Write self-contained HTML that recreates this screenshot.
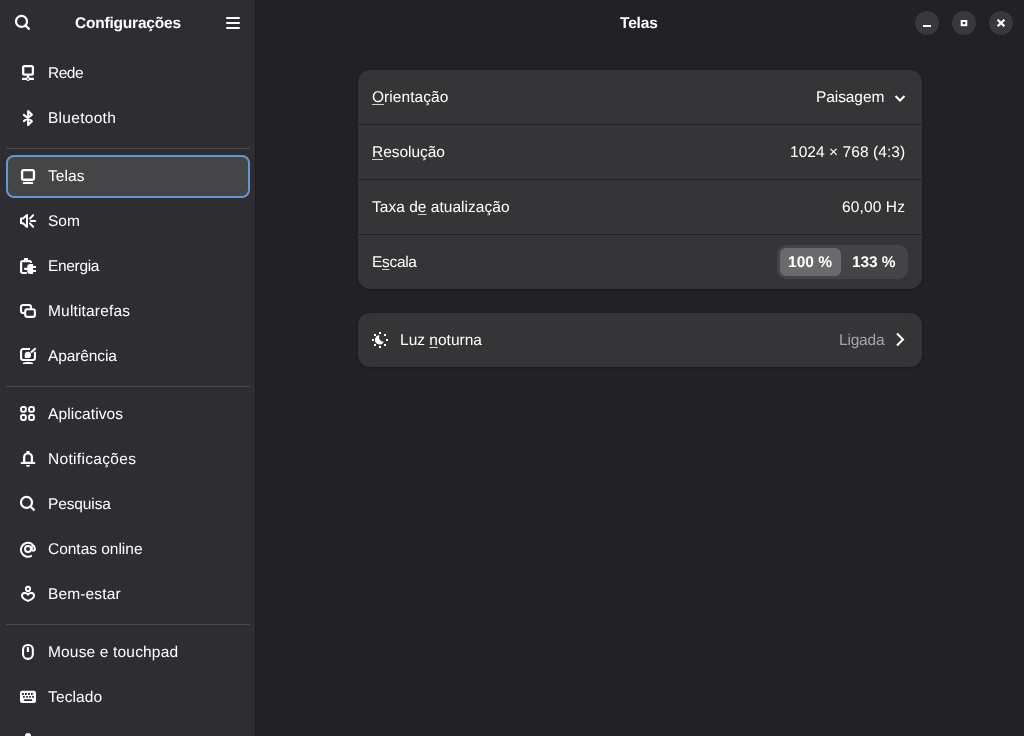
<!DOCTYPE html>
<html><head><meta charset="utf-8">
<style>
html,body{margin:0;padding:0;width:1024px;height:736px;overflow:hidden;background:#222226;}
*{box-sizing:border-box;}
body{font-family:"Liberation Sans",sans-serif;text-rendering:geometricPrecision;color:#fff;font-size:15.5px;position:relative;}
.abs{position:absolute;}
#sb{position:absolute;left:0;top:0;width:255px;height:736px;background:#2e2e32;}
#sbb{position:absolute;left:255px;top:0;width:1px;height:736px;background:#1c1c20;}
.t{position:absolute;margin-top:1px;white-space:nowrap;will-change:transform;line-height:18px;height:18px;}
.r{text-align:right;}
.b{font-weight:bold;}
.ic{position:absolute;width:16px;height:16px;overflow:visible;}
.sep{position:absolute;left:6px;width:244px;height:1px;background:#4a4a4e;}
.sel{position:absolute;left:6px;top:155px;width:244px;height:43px;border-radius:8px;background:#454548;border:2px solid #6597d2;}
.card{position:absolute;left:358px;width:564px;background:#353538;border-radius:12px;box-shadow:0 0 0 1px rgba(0,0,6,0.04),0 1px 3px 0 rgba(0,0,6,0.22);}
.rsep{position:absolute;left:0;width:564px;height:1px;background:#232327;}
.u{text-decoration:underline;text-decoration-thickness:1.4px;text-underline-offset:1.6px;text-decoration-color:rgba(255,255,255,0.78);}
.wb{position:absolute;top:11px;width:24px;height:24px;border-radius:12px;background:#39393d;}
</style></head><body>
<div id="sb"></div><div id="sbb"></div>

<svg class="ic" style="left:15px;top:15px" viewBox="0 0 16 16"><circle cx="6.5" cy="6.4" r="5.5" fill="none" stroke="#fff" stroke-width="2.2"/><path stroke="#fff" stroke-width="2.2" d="M10.3,10.3L14.5,14.5"/></svg>
<div class="t b" id="h1" style="left:75px;top:13.5px;letter-spacing:-0.202px;">Configurações</div>
<svg class="abs" style="left:224px;top:14px" width="18" height="18" viewBox="0 0 18 18"><path stroke="#fff" stroke-width="2" stroke-linecap="round" d="M3,4H15M3,9H15M3,14H15"/></svg>

<div class="sep" style="top:148px"></div>
<div class="sep" style="top:386px"></div>
<div class="sep" style="top:624px"></div>
<div class="sel"></div>
<svg class="ic" style="left:20px;top:65px" viewBox="0 0 16 16" fill="#fff"><path fill-rule="evenodd" d="M4.5,0H11.5A2.5,2.5 0 0 1 14,2.5V8.3A2.5,2.5 0 0 1 11.5,10.8H4.5A2.5,2.5 0 0 1 2,8.3V2.5A2.5,2.5 0 0 1 4.5,0ZM4.3,2.2V8.6H11.8V2.2Z"/><rect x="6.8" y="10.5" width="2.4" height="2.5"/><rect x="2" y="12.8" width="12" height="2.1" rx="0.6"/><circle cx="8" cy="14" r="1.9"/><rect x="7.2" y="13.3" width="1.6" height="1.3" fill="#2e2e32"/></svg>
<div class="t" id="s0" style="left:48px;top:64px;letter-spacing:-0.486px;">Rede</div>
<svg class="ic" style="left:20px;top:110px" viewBox="0 0 16 16" fill="#fff"><path fill="none" stroke="#fff" stroke-width="2.1" stroke-linecap="round" stroke-linejoin="round" d="M3.9,4.9L11.9,11.3L8.15,14.9V1.05L11.9,4.7L3.9,11.1"/></svg>
<div class="t" id="s1" style="left:48px;top:109px;letter-spacing:0.283px;">Bluetooth</div>
<svg class="ic" style="left:20px;top:168px" viewBox="0 0 16 16" fill="#fff"><path fill-rule="evenodd" d="M3.8,0.9H12.2A2.9,2.9 0 0 1 15.1,3.8V10.1A2.9,2.9 0 0 1 12.2,13H3.8A2.9,2.9 0 0 1 0.9,10.1V3.8A2.9,2.9 0 0 1 3.8,0.9ZM3.3,3.3V10.5H12.8V3.3Z"/><path d="M2.8,15.9V14.3Q8,13.3 13.1,14.3V15.9Z"/></svg>
<div class="t" id="s2" style="left:48px;top:167px;letter-spacing:0.075px;">Telas</div>
<svg class="ic" style="left:20px;top:213px" viewBox="0 0 16 16" fill="#fff"><path fill="none" stroke="#fff" stroke-width="2" stroke-linejoin="round" d="M1,5.5V10.3H3L7,13.9V2L3,5.5Z"/><path fill="none" stroke="#fff" stroke-width="2" stroke-linecap="round" d="M9.9,5.6L13.1,2.3M10.9,8H15.2M9.9,10.4L13.1,13.7"/></svg>
<div class="t" id="s3" style="left:48px;top:212px;letter-spacing:0.000px;">Som</div>
<svg class="ic" style="left:20px;top:258px" viewBox="0 0 16 16" fill="#fff"><path d="M4,0H8V2H4Z"/><path fill-rule="evenodd" d="M3,2H9.5A2.5,2.5 0 0 1 12,4.5V5H10A0.5,0.5 0 0 0 9.5,4.3H2.2V13.9H6.8V15.9H3A3,3 0 0 1 0,12.9V5A3,3 0 0 1 3,2Z"/><path d="M10.2,5.9H13.1V8H16V10H13.1V12H16V14H13.1V15.9H10.2A3,3 0 0 1 7.2,12.9V12.1H4.2V9.8H7.2V8.9A3,3 0 0 1 10.2,5.9Z"/></svg>
<div class="t" id="s4" style="left:48px;top:257px;letter-spacing:-0.333px;">Energia</div>
<svg class="ic" style="left:20px;top:303px" viewBox="0 0 16 16" fill="#fff"><path fill="none" stroke="#fff" stroke-width="2.1" d="M5,10H3A2,2 0 0 1 1,8V4A2,2 0 0 1 3,2H9A2,2 0 0 1 11,4V6.1"/><rect x="5.2" y="6.2" width="9.7" height="7.7" rx="2.2" fill="none" stroke="#fff" stroke-width="2.1"/></svg>
<div class="t" id="s5" style="left:48px;top:302px;letter-spacing:0.172px;">Multitarefas</div>
<svg class="ic" style="left:20px;top:348px" viewBox="0 0 16 16" fill="#fff"><path fill="none" stroke="#fff" stroke-width="2.1" d="M10,1.05H3.3A2.25,2.25 0 0 0 1.05,3.3V9.7A2.25,2.25 0 0 0 3.3,11.95H12.7A2.25,2.25 0 0 0 14.95,9.7V3.87"/><path d="M2.9,16V14.8C4.2,13.6 11.6,13.6 12.9,14.8V16Z"/><path d="M4.75,10.1V7A3.15,3.15 0 1 1 7.9,10.1Z"/><path stroke="#fff" stroke-width="2.1" d="M10.9,4.6L15.7,0.2"/></svg>
<div class="t" id="s6" style="left:48px;top:347px;letter-spacing:-0.108px;">Aparência</div>
<svg class="ic" style="left:20px;top:406px" viewBox="0 0 16 16" fill="#fff"><g fill="none" stroke="#fff" stroke-width="1.95"><rect x="1.1" y="0.9" width="4.7" height="4.8" rx="1.6"/><rect x="9.1" y="0.9" width="4.8" height="4.8" rx="1.6"/><rect x="1.1" y="9" width="4.7" height="4.9" rx="1.6"/><rect x="9.1" y="9" width="4.8" height="4.9" rx="1.6"/></g></svg>
<div class="t" id="s7" style="left:48px;top:405px;letter-spacing:0.100px;">Aplicativos</div>
<svg class="ic" style="left:20px;top:451px" viewBox="0 0 16 16" fill="#fff"><path fill-rule="evenodd" d="M7,-0.1H9A1,1 0 0 1 9.4,1.5Q13.1,2.6 13.1,6.5V11H14.1A1,1 0 0 1 14.6,13.1H1.4A1,1 0 0 1 1.9,11H3V6.5Q3,2.6 6.6,1.5A1,1 0 0 1 7,-0.1ZM5.3,6.2V10.7H10.8V6.2Q10.8,3.5 8,3.5Q5.3,3.5 5.3,6.2Z"/><path d="M5.8,14H10.2Q9.6,16 8,16Q6.4,16 5.8,14Z"/></svg>
<div class="t" id="s8" style="left:48px;top:450px;letter-spacing:0.318px;">Notificações</div>
<svg class="ic" style="left:20px;top:496px" viewBox="0 0 16 16" fill="#fff"><circle cx="6.5" cy="6.4" r="5.5" fill="none" stroke="#fff" stroke-width="2.2"/><path stroke="#fff" stroke-width="2.2" d="M10.3,10.3L14.5,14.5"/></svg>
<div class="t" id="s9" style="left:48px;top:495px;letter-spacing:-0.126px;">Pesquisa</div>
<svg class="ic" style="left:20px;top:541px" viewBox="0 0 16 16" fill="#fff"><circle cx="8" cy="7.9" r="3" fill="none" stroke="#fff" stroke-width="2"/><path fill="none" stroke="#fff" stroke-width="2" d="M11.8,14.6A7,7 0 1 1 14.9,8V8.6A1.6,1.6 0 0 1 11.8,8.6V4.6"/></svg>
<div class="t" id="s10" style="left:48px;top:540px;letter-spacing:-0.024px;">Contas online</div>
<svg class="ic" style="left:20px;top:586px" viewBox="0 0 16 16" fill="#fff"><circle cx="8" cy="2.9" r="2.1" fill="none" stroke="#fff" stroke-width="2"/><path fill="none" stroke="#fff" stroke-width="2" stroke-linejoin="round" d="M8,8.6C6.4,6.4 2,6.3 2,9.7C2,12.2 5.6,14 8,14.9C10.4,14 14,12.2 14,9.7C14,6.3 9.6,6.4 8,8.6Z"/></svg>
<div class="t" id="s11" style="left:48px;top:585px;letter-spacing:0.142px;">Bem-estar</div>
<svg class="ic" style="left:20px;top:644px" viewBox="0 0 16 16" fill="#fff"><rect x="3.05" y="0.95" width="9.8" height="13.9" rx="4.6" fill="none" stroke="#fff" stroke-width="2.1"/><rect x="6.8" y="3" width="2.2" height="5" rx="0.5"/></svg>
<div class="t" id="s12" style="left:48px;top:643px;letter-spacing:0.167px;">Mouse e touchpad</div>
<svg class="ic" style="left:20px;top:689px" viewBox="0 0 16 16" fill="#fff"><path fill-rule="evenodd" d="M2,1.85H14A2,2 0 0 1 16,3.85V11.9A2,2 0 0 1 14,13.9H2A2,2 0 0 1 0,11.9V3.85A2,2 0 0 1 2,1.85ZM2,4.1V5.9H3.8V4.1ZM5,4.1V5.9H6.8V4.1ZM8,4.1V5.9H9.9V4.1ZM11,4.1V5.9H12.8V4.1ZM3,7.06V8.86H4.8V7.06ZM6.1,7.06V8.86H7.9V7.06ZM9,7.06V8.86H10.8V7.06ZM12.1,7.06V8.86H13.9V7.06ZM4.15,10.2V12H12V10.2Z"/></svg>
<div class="t" id="s13" style="left:48px;top:688px;letter-spacing:0.132px;">Teclado</div>
<div class="abs" style="left:25px;top:733px;width:6px;height:6px;border-radius:3px;background:#fff"></div>

<div class="t b" id="h2" style="left:620px;top:14px;letter-spacing:-0.175px;">Telas</div>
<div class="wb" style="left:915px"><svg class="abs" style="left:0;top:0" width="24" height="24" viewBox="0 0 24 24"><rect x="8" y="14" width="8" height="2" fill="#fff"/></svg></div>
<div class="wb" style="left:952px"><svg class="abs" style="left:0;top:0" width="24" height="24" viewBox="0 0 24 24"><rect x="9.7" y="10" width="4.6" height="4.2" fill="none" stroke="#fff" stroke-width="2"/></svg></div>
<div class="wb" style="left:989px"><svg class="abs" style="left:0;top:0" width="24" height="24" viewBox="0 0 24 24"><path stroke="#fff" stroke-width="2.2" d="M8.6,8.7L15.4,15.3M15.4,8.7L8.6,15.3"/></svg></div>

<div class="card" style="top:70px;height:219px;">
  <div class="rsep" style="top:54px"></div>
  <div class="rsep" style="top:109px"></div>
  <div class="rsep" style="top:164px"></div>
</div>
<div class="t" id="c1" style="left:372px;top:88px;letter-spacing:0.047px;"><span class="u">O</span>rientação</div>
<div class="t" id="c2" style="left:815.6px;top:88px;letter-spacing:-0.084px;">Paisagem</div>
<svg class="abs" style="left:892px;top:90px" width="16" height="16" viewBox="0 0 16 16"><path fill="none" stroke="#fff" stroke-width="2" d="M3.5,6L8,10.5L12.5,6"/></svg>
<div class="t" id="c3" style="left:372px;top:143px;letter-spacing:-0.050px;"><span class="u">R</span>esolução</div>
<div class="t" id="c4" style="left:790.4px;top:143px;letter-spacing:0.062px;">1024 × 768 (4:3)</div>
<div class="t" id="c5" style="left:372px;top:198px;letter-spacing:0.028px;">Taxa d<span class="u">e</span> atualização</div>
<div class="t" id="c6" style="left:842.4px;top:198px;letter-spacing:0.127px;">60,00 Hz</div>
<div class="t" id="c7" style="left:372px;top:253px;letter-spacing:-0.320px;">E<span class="u">s</span>cala</div>
<div class="abs" style="left:777px;top:245px;width:131px;height:34px;border-radius:9px;background:#444447;"></div>
<div class="abs" style="left:780px;top:248px;width:61px;height:28px;border-radius:6px;background:#6a6a6d;"></div>
<div class="t b" id="c8" style="left:788px;top:253px;letter-spacing:0.025px;">100 %</div>
<div class="t b" id="c9" style="left:852px;top:253px;letter-spacing:-0.125px;">133 %</div>

<div class="card" style="top:313px;height:54px;"></div>
<svg class="abs" style="left:372px;top:332px" width="16" height="16" viewBox="0 0 16 16" fill="#fff"><g>
<rect x="7" y="0" width="2" height="2"/><rect x="7" y="14" width="2" height="2"/><rect x="0" y="7" width="2" height="2"/><rect x="14" y="7" width="2" height="2"/>
<rect x="2" y="2" width="2" height="2"/><rect x="12" y="2" width="2" height="2"/><rect x="2" y="12" width="2" height="2"/><rect x="12" y="12" width="2" height="2"/>
</g><path d="M7.58,3.2A4.6,4.6 0 1 0 11.81,9.64A4.39,4.39 0 0 1 7.58,3.2Z"/></svg>
<div class="t" id="c10" style="left:400px;top:331px;letter-spacing:0.010px;">Luz <span class="u">n</span>oturna</div>
<div class="t" id="c11" style="left:838.6px;top:331px;color:#a5a5a8;letter-spacing:-0.200px;">Ligada</div>
<svg class="abs" style="left:892px;top:332px" width="16" height="16" viewBox="0 0 16 16"><path fill="none" stroke="#fff" stroke-width="2" d="M5,1.5L11,7.5L5,13.5"/></svg>
</body></html>
